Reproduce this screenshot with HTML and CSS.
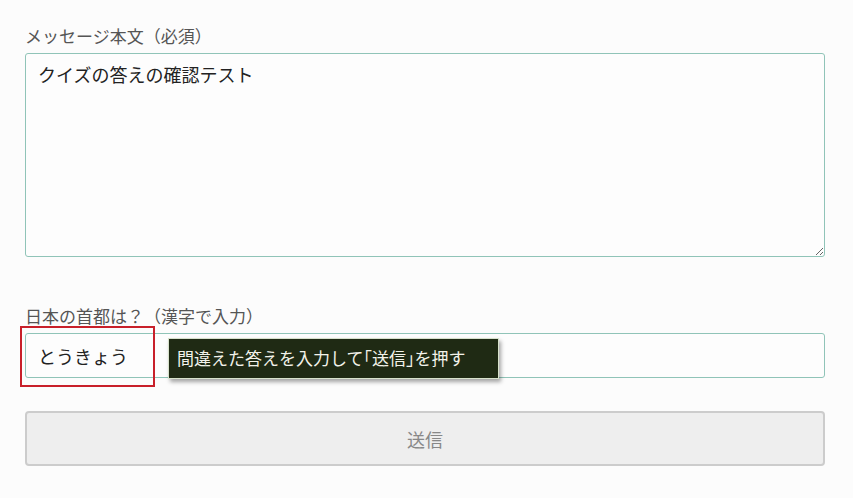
FILE: index.html
```html
<!DOCTYPE html>
<html lang="ja">
<head>
<meta charset="utf-8">
<link rel="stylesheet" href="styles.css">
</head>
<body>
<form class="form">
  <div class="field">
    <label class="label">メッセージ本文（必須）</label>
    <textarea class="textarea">クイズの答えの確認テスト</textarea>
  </div>
  <div class="field field-quiz">
    <label class="label">日本の首都は？（漢字で入力）</label>
    <div class="input-wrap">
      <input class="input" type="text" value="とうきょう">
      <span class="highlight"></span>
      <span class="tooltip">間違えた答えを入力して<span class="bracket">「送信」</span>を押す</span>
    </div>
  </div>
  <button class="submit" type="button">送信</button>
</form>
</body>
</html>
```

FILE: styles.css
```css
html, body {
  margin: 0;
  padding: 0;
  background: #fcfcfc;
}
body {
  font-family: "Noto Sans CJK JP", "Noto Sans", sans-serif;
  color: #333;
}
.form {
  width: 800px;
  padding: 24px 0 0 25px;
  display: flex;
  flex-direction: column;
}
.field {
  display: flex;
  flex-direction: column;
}
.label {
  font-size: 17px;
  line-height: 23px;
  color: #555;
  margin-bottom: 6px;
}
.textarea {
  box-sizing: border-box;
  width: 800px;
  height: 204px;
  border: 1px solid #90c4b8;
  border-radius: 3px;
  background: #fdfdfd;
  padding: 7px 12px;
  font-family: "Noto Sans CJK JP", sans-serif;
  font-size: 18px;
  line-height: 26px;
  color: #222;
  resize: vertical;
  margin: 0;
}
.field-quiz {
  margin-top: 47px;
}
.input-wrap {
  position: relative;
}
.input {
  box-sizing: border-box;
  width: 800px;
  height: 45px;
  border: 1px solid #90c4b8;
  border-radius: 3px;
  background: #fdfdfd;
  padding: 0 12px;
  font-family: "Noto Sans CJK JP", sans-serif;
  font-size: 18px;
  color: #222;
  margin: 0;
  display: block;
}
.highlight {
  position: absolute;
  left: -5px;
  top: -7px;
  width: 131px;
  height: 57px;
  border: 2px solid #c8202a;
}
.tooltip {
  position: absolute;
  left: 143px;
  top: 5px;
  width: 331px;
  height: 41px;
  box-sizing: border-box;
  background: #1f2a14;
  border: 1px solid #d8e2cc;
  color: #f2f2ea;
  font-size: 17px;
  line-height: 38px;
  padding-left: 8px;
  box-shadow: 2px 3px 4px rgba(0,0,0,0.35);
  white-space: nowrap;
}
.bracket {
  font-feature-settings: "halt" 1;
}
.submit {
  margin-top: 33px;
  box-sizing: border-box;
  width: 800px;
  height: 55px;
  background: #eeeeee;
  border: 2px solid #cccccc;
  border-radius: 4px;
  font-family: "Noto Sans CJK JP", sans-serif;
  font-size: 18px;
  color: #888;
  padding: 0;
}
```
